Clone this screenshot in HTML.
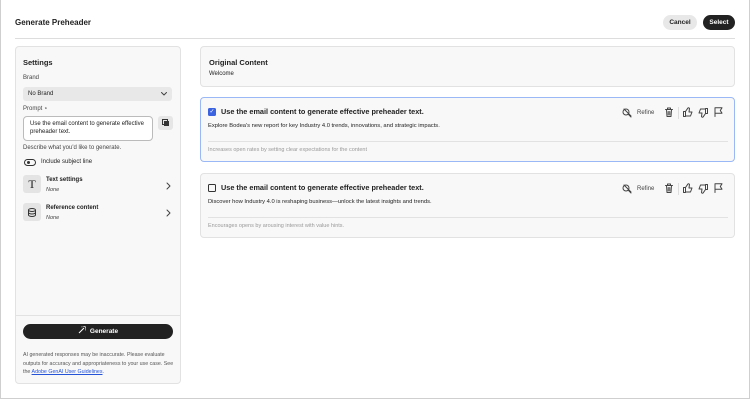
<!DOCTYPE html>
<html><head><style>
*{box-sizing:border-box;margin:0;padding:0}
body{width:750px;height:400px;overflow:hidden;font-family:"Liberation Sans",sans-serif;color:#222;background:#fff;position:relative}
.frame{position:absolute;left:0;top:0;width:750px;height:399px;border:1px solid #cfcfcf;border-top:none}
.a{position:absolute}
.t{font-size:8.5px;font-weight:bold}
.s{font-size:6px;color:#444}
.card{position:absolute;background:#f8f8f8;border:1px solid #e2e2e2;border-radius:4px}
svg.i{position:absolute;fill:none;stroke:#444;stroke-width:1;stroke-linejoin:round;stroke-linecap:round}
</style></head><body>
<div class="frame"></div>
<div class="a t" style="left:15px;top:18px;font-size:8px">Generate Preheader</div>
<div class="a" style="left:15px;top:38px;width:720px;height:1px;background:#ddd"></div>
<div class="a" style="left:663px;top:15px;width:34px;height:15px;border-radius:8px;background:#e8e8e8;font-size:6.5px;font-weight:bold;text-align:center;line-height:15px">Cancel</div>
<div class="a" style="left:703px;top:15px;width:32px;height:15px;border-radius:8px;background:#222;color:#fff;font-size:6.5px;font-weight:bold;text-align:center;line-height:15px">Select</div>

<div class="card" style="left:15px;top:46px;width:166px;height:338px">
 <div class="a t" style="left:7px;top:11px;font-size:7.5px">Settings</div>
 <div class="a s" style="left:7px;top:28px">Brand</div>
 <div class="a" style="left:7px;top:40px;width:149px;height:14px;background:#e8e8e8;border-radius:3px;font-size:6px;line-height:14px;padding-left:5px">No Brand<svg class="i" style="right:5px;top:5px" width="6" height="4"><path d="M.5 .5L3 3 5.5 .5"/></svg></div>
 <div class="a s" style="left:7px;top:58px">Prompt &#8902;</div>
 <div class="a" style="left:7px;top:69px;width:130px;height:25px;background:#fff;border:1px solid #bbb;border-radius:4px;font-size:6px;line-height:8px;padding:3px 6px">Use the email content to generate effective preheader text.</div>
 <div class="a" style="left:142px;top:69px;width:15px;height:14px;background:#e6e6e6;border-radius:3px"><div style="position:absolute;left:4px;top:3px;width:6px;height:6px;border:1px solid #333"></div><div style="position:absolute;left:6px;top:5px;width:5px;height:5px;background:#333"></div></div>
 <div class="a s" style="left:7px;top:98px">Describe what you'd like to generate.</div>
 <div class="a" style="left:8px;top:112px;width:12px;height:7px;border:1.2px solid #333;border-radius:4px"><div style="position:absolute;left:1.5px;top:1px;width:3px;height:3px;border-radius:50%;background:#333"></div></div>
 <div class="a s" style="left:25px;top:112px;color:#222">Include subject line</div>
 <div class="a" style="left:7px;top:128px;width:18px;height:18px;background:#e4e4e4;border-radius:3px;font-family:'Liberation Serif',serif;font-size:12px;text-align:center;line-height:18px">T</div>
 <div class="a" style="left:30px;top:130px;font-size:6px;font-weight:bold">Text settings</div>
 <div class="a" style="left:30px;top:140px;font-size:5.5px;font-style:italic;color:#444">None</div>
 <svg class="i" style="left:150px;top:135px" width="5" height="8"><path d="M1 1L4 4 1 7"/></svg>
 <div class="a" style="left:7px;top:156px;width:18px;height:18px;background:#e4e4e4;border-radius:3px"><svg width="18" height="18"><ellipse cx="9" cy="7" rx="3.5" ry="1.5" fill="none" stroke="#333" stroke-width="1"/><path d="M5.5 7v5c0 .8 1.6 1.5 3.5 1.5s3.5-.7 3.5-1.5V7M5.5 9.5c0 .8 1.6 1.5 3.5 1.5s3.5-.7 3.5-1.5" fill="none" stroke="#333" stroke-width="1"/></svg></div>
 <div class="a" style="left:30px;top:158px;font-size:6px;font-weight:bold">Reference content</div>
 <div class="a" style="left:30px;top:168px;font-size:5.5px;font-style:italic;color:#444">None</div>
 <svg class="i" style="left:150px;top:162px" width="5" height="8"><path d="M1 1L4 4 1 7"/></svg>
 <div class="a" style="left:0;top:268px;width:164px;height:1px;background:#e2e2e2"></div>
 <div class="a" style="left:7px;top:277px;width:150px;height:15px;background:#222;border-radius:8px;color:#fff;font-size:6.5px;font-weight:bold;text-align:center;line-height:15px"><svg width="9" height="9" style="vertical-align:-1px;margin-right:3px" fill="none" stroke="#fff" stroke-width="1"><path d="M1 8L6 3M6 1v1M8 3h-1M7.5 1.5l-.7.7M4 1.5v.8M7.5 4.5v.8"/></svg>Generate</div>
 <div class="a" style="left:7px;top:304px;width:152px;font-size:5.3px;line-height:8.5px;color:#555">AI generated responses may be inaccurate. Please evaluate outputs for accuracy and appropriateness to your use case. See the <span style="color:#2553d8;text-decoration:underline">Adobe GenAI User Guidelines</span>.</div>
</div>

<div class="card" style="left:200px;top:46px;width:535px;height:41px">
 <div class="a t" style="left:8px;top:11px;font-size:7.5px">Original Content</div>
 <div class="a" style="left:8px;top:24px;font-size:6px">Welcome</div>
</div>

<div class="card" style="left:200px;top:97px;width:535px;height:65px;border-color:#9ab8f5;border-width:1.5px">
 <div class="a" style="left:7px;top:10px;width:8px;height:8px;background:#3b63e0;border-radius:1.5px;color:#fff;font-size:6px;line-height:8px;text-align:center">&#10003;</div>
 <div class="a t" style="left:20px;top:9px;font-size:7.3px">Use the email content to generate effective preheader text.</div>
 <div class="a" style="left:7px;top:25px;font-size:5.8px">Explore Bodea's new report for key Industry 4.0 trends, innovations, and strategic impacts.</div>
 <div class="a" style="left:7px;top:43px;width:520px;height:1px;background:#e2e2e2"></div>
 <div class="a" style="left:7px;top:49px;font-size:5.5px;color:#999">Increases open rates by setting clear expectations for the content</div>
</div>

<div class="card" style="left:200px;top:173px;width:535px;height:65px">
 <div class="a" style="left:7px;top:10px;width:8px;height:8px;border:1.2px solid #333;border-radius:1.5px"></div>
 <div class="a t" style="left:20px;top:9px;font-size:7.3px">Use the email content to generate effective preheader text.</div>
 <div class="a" style="left:7px;top:25px;font-size:5.8px">Discover how Industry 4.0 is reshaping business—unlock the latest insights and trends.</div>
 <div class="a" style="left:7px;top:43px;width:520px;height:1px;background:#e2e2e2"></div>
 <div class="a" style="left:7px;top:49px;font-size:5.5px;color:#999">Encourages opens by arousing interest with value hints.</div>
</div>

<div class="a" style="left:622px;top:107px;width:110px;height:12px">
 <svg class="i" style="left:0;top:1px" width="10" height="10"><circle cx="4" cy="4" r="3"/><path d="M6.2 6.2L9 9M2 1l7 7"/></svg>
 <div class="a" style="left:15px;top:3px;font-size:6px;color:#444">Refine</div>
 <svg class="i" style="left:43px;top:0" width="8" height="10"><path d="M.5 2.5h7M2.5 2.5V1h3v1.5M1.5 2.5l.5 7h4l.5-7M3.2 4.5v3.5M4.8 4.5v3.5"/></svg>
 <div class="a" style="left:56px;top:0;width:1px;height:12px;background:#ddd"></div>
 <svg class="i" style="left:61px;top:0" width="10" height="10"><path d="M.5 4.5h2v5h-2zM2.5 9h5l1.5-4H6l.5-3.5C6 .5 5 .5 4.7 1.3L2.5 4.5"/></svg>
 <svg class="i" style="left:76px;top:1px" width="10" height="10"><path d="M9.5 5.5h-2v-5h2zM7.5 1h-5L1 5h3l-.5 3.5c.5 1 1.5 1 1.8.2l2.2-3.2"/></svg>
 <svg class="i" style="left:92px;top:0" width="9" height="10"><path d="M1 9.5V.8h7L6.3 3.5 8 6.2H1"/></svg>
</div>
<div class="a" style="left:622px;top:183px;width:110px;height:12px">
 <svg class="i" style="left:0;top:1px" width="10" height="10"><circle cx="4" cy="4" r="3"/><path d="M6.2 6.2L9 9M2 1l7 7"/></svg>
 <div class="a" style="left:15px;top:3px;font-size:6px;color:#444">Refine</div>
 <svg class="i" style="left:43px;top:0" width="8" height="10"><path d="M.5 2.5h7M2.5 2.5V1h3v1.5M1.5 2.5l.5 7h4l.5-7M3.2 4.5v3.5M4.8 4.5v3.5"/></svg>
 <div class="a" style="left:56px;top:0;width:1px;height:12px;background:#ddd"></div>
 <svg class="i" style="left:61px;top:0" width="10" height="10"><path d="M.5 4.5h2v5h-2zM2.5 9h5l1.5-4H6l.5-3.5C6 .5 5 .5 4.7 1.3L2.5 4.5"/></svg>
 <svg class="i" style="left:76px;top:1px" width="10" height="10"><path d="M9.5 5.5h-2v-5h2zM7.5 1h-5L1 5h3l-.5 3.5c.5 1 1.5 1 1.8.2l2.2-3.2"/></svg>
 <svg class="i" style="left:92px;top:0" width="9" height="10"><path d="M1 9.5V.8h7L6.3 3.5 8 6.2H1"/></svg>
</div>
</body></html>
